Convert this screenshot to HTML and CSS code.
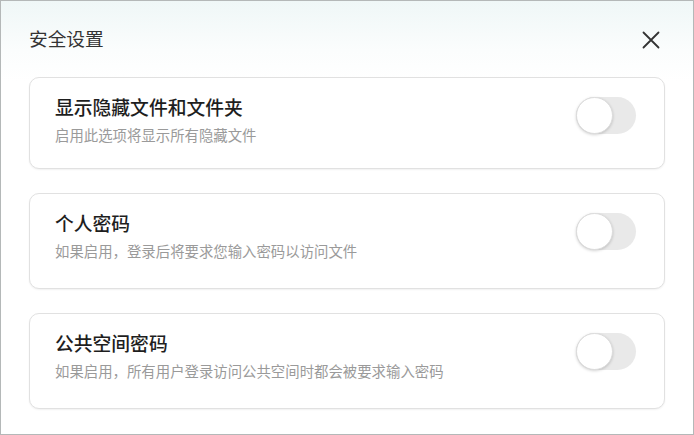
FILE: index.html
```html
<!DOCTYPE html>
<html lang="zh-CN">
<head>
<meta charset="utf-8">
<title>安全设置</title>
<link rel="stylesheet" href="styles.css">
</head>
<body>
<div class="dialog">
  <div class="dialog-header">
    <h1 class="dialog-title">安全设置</h1>
    <button class="close-btn" aria-label="关闭">
      <svg width="18" height="18" viewBox="0 0 18 18"><path d="M1.5 1.5 L16.5 16.5 M16.5 1.5 L1.5 16.5" stroke="#333" stroke-width="1.8" stroke-linecap="round" fill="none"/></svg>
    </button>
  </div>
  <div class="cards">
    <div class="card card-first">
      <div class="card-text">
        <div class="card-title">显示隐藏文件和文件夹</div>
        <div class="card-desc">启用此选项将显示所有隐藏文件</div>
      </div>
      <div class="toggle"><span class="knob"></span></div>
    </div>
    <div class="card">
      <div class="card-text">
        <div class="card-title">个人密码</div>
        <div class="card-desc">如果启用，登录后将要求您输入密码以访问文件</div>
      </div>
      <div class="toggle"><span class="knob"></span></div>
    </div>
    <div class="card">
      <div class="card-text">
        <div class="card-title">公共空间密码</div>
        <div class="card-desc">如果启用，所有用户登录访问公共空间时都会被要求输入密码</div>
      </div>
      <div class="toggle"><span class="knob"></span></div>
    </div>
  </div>
</div>
</body>
</html>
```
FILE: styles.css
```css
* { box-sizing: border-box; }
html, body { margin: 0; padding: 0; }
body {
  font-family: "Noto Sans CJK SC", "Noto Sans", sans-serif;
  background: #fff;
}
.dialog {
  width: 694px;
  height: 435px;
  border: 1px solid #b4b8b8;
  background: linear-gradient(to bottom, #eff7f7 0px, #fbfdfd 50px, #ffffff 80px);
  overflow: hidden;
}
.dialog-header {
  display: flex;
  justify-content: space-between;
  align-items: flex-start;
  padding: 24px 33px 0 28px;
}
.dialog-title {
  margin: 0;
  font-size: 18.7px;
  line-height: 26px;
  font-weight: 400;
  color: #333;
}
.close-btn {
  margin: 6px 0 0 0;
  padding: 0;
  border: 0;
  background: none;
  width: 18px;
  height: 18px;
  display: block;
}
.close-btn svg { display: block; }
.cards {
  display: flex;
  flex-direction: column;
  gap: 24px;
  padding: 26px 28px 0 28px;
}
.card {
  display: flex;
  justify-content: space-between;
  align-items: flex-start;
  height: 96px;
  padding: 17px 28px 0 25px;
  border: 1px solid #e1e1e1;
  border-radius: 10px;
  background: #fff;
  box-shadow: 0 1px 2px rgba(0, 0, 0, 0.06);
}
.card-first { height: 92px; }
.card-title {
  font-size: 18.8px;
  line-height: 24px;
  font-weight: 500;
  color: #1e1e1e;
}
.card-desc {
  margin-top: 4px;
  font-size: 14.4px;
  line-height: 24px;
  color: #9a9a9a;
}
.toggle {
  margin-top: 2px;
  width: 60px;
  height: 37px;
  border-radius: 19px;
  background: #e9e9e9;
  position: relative;
  flex: none;
}
.knob {
  position: absolute;
  left: 0;
  top: 0;
  width: 37px;
  height: 37px;
  border-radius: 50%;
  background: #fff;
  border: 1px solid #dcdcdc;
  box-shadow: 0 1px 3px rgba(0, 0, 0, 0.18);
}
```
